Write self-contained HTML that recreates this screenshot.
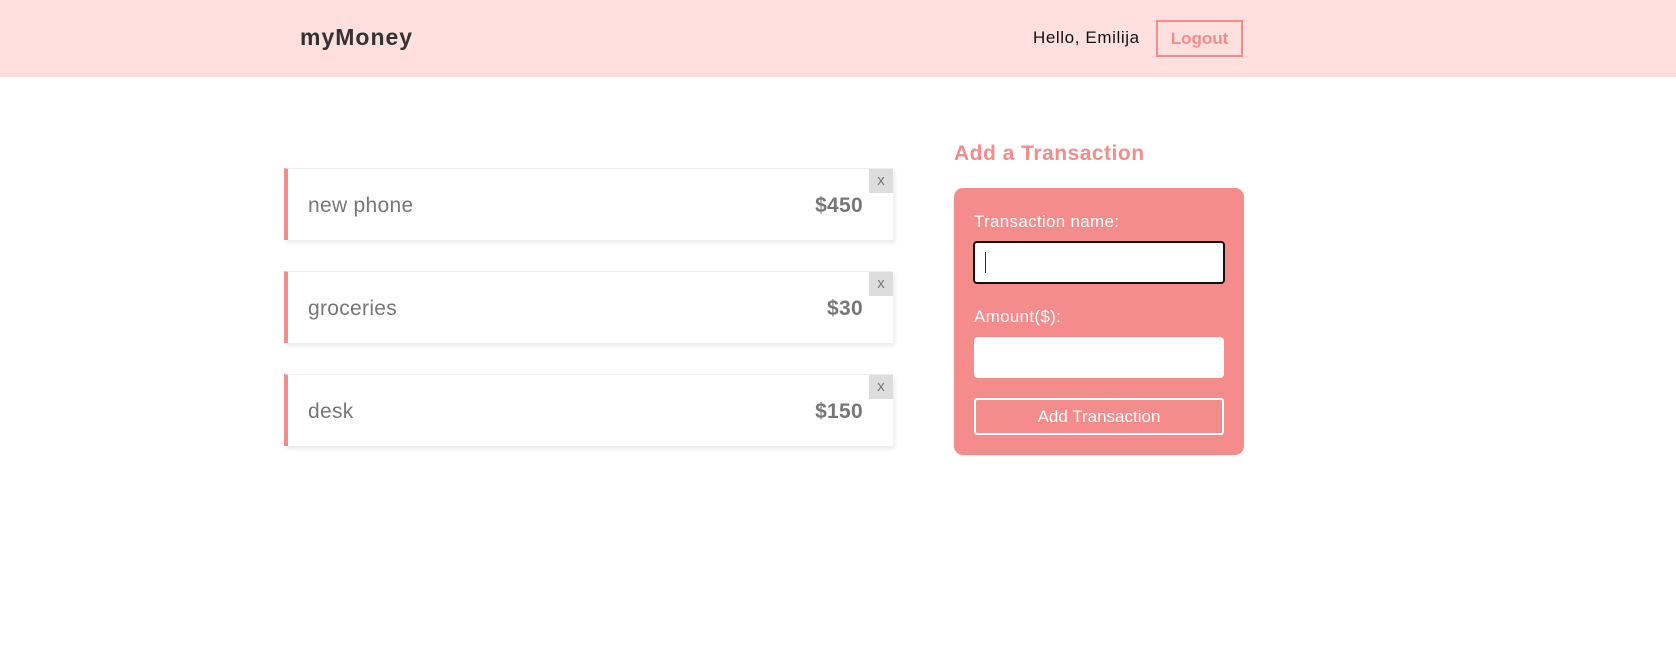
<!DOCTYPE html>
<html><head><meta charset="utf-8"><style>
*{box-sizing:border-box;margin:0;padding:0}
body{width:1676px;height:659px;background:#fff;font-family:"Liberation Sans",sans-serif;position:relative;overflow:hidden}
.hdr{position:absolute;left:0;top:0;width:1676px;height:77px;background:#ffe0df}
.logo{position:absolute;left:300px;top:24px;font-size:23px;font-weight:bold;color:#333;letter-spacing:1px}
.hello{position:absolute;left:1033px;top:28px;font-size:17px;color:#111;letter-spacing:.6px}
.logout{position:absolute;left:1156px;top:20px;width:87px;height:37px;border:2px solid #f48c8c;color:#f48c8c;font-weight:bold;font-size:17px;text-align:center;line-height:33px}
.card{position:absolute;left:284px;width:609px;height:72px;background:#fff;border-left:4px solid #f48c8c;border-top:1px solid #eee;box-shadow:2px 3px 4px rgba(0,0,0,.08)}
.card .n{position:absolute;left:20px;top:25px;font-size:21px;color:#777;letter-spacing:.3px}
.card .a{position:absolute;right:30px;top:25px;font-size:21px;font-weight:bold;color:#777;letter-spacing:.3px}
.card .x{position:absolute;right:0;top:0;width:24px;height:24px;background:#ddd;color:#777;font-size:15px;text-align:center;line-height:23px}
h2{position:absolute;left:954px;top:142px;font-size:21px;font-weight:bold;color:#f48c8c;letter-spacing:.5px}
.form{position:absolute;left:954px;top:188px;width:290px;height:267px;background:#f48c8c;border-radius:9px}
.lbl{position:absolute;left:20px;color:#fff;font-size:17px;letter-spacing:.3px}
.in{position:absolute;left:19px;width:252px;background:#fff;border-radius:4px}
.btn{position:absolute;left:20px;top:210px;width:250px;height:37px;border:2px solid #fff;border-radius:3px;color:#fff;font-size:17px;text-align:center;line-height:33px}
</style></head><body>
<div class="hdr"><div class="logo">myMoney</div><div class="hello">Hello, Emilija</div><div class="logout">Logout</div></div>
<div class="card" style="top:168px"><div class="n">new phone</div><div class="a">$450</div><div class="x">x</div></div>
<div class="card" style="top:271px"><div class="n">groceries</div><div class="a">$30</div><div class="x">x</div></div>
<div class="card" style="top:374px"><div class="n">desk</div><div class="a">$150</div><div class="x">x</div></div>
<h2>Add a Transaction</h2>
<div class="form">
<div class="lbl" style="top:24px">Transaction name:</div>
<div class="in" style="top:53px;height:43px;border:2px solid #111"><div style="position:absolute;left:10px;top:9px;width:1px;height:21px;background:#333"></div></div>
<div class="lbl" style="top:119px">Amount($):</div>
<div class="in" style="top:149px;height:41px;left:20px;width:250px"></div>
<div class="btn">Add Transaction</div>
</div>
</body></html>
